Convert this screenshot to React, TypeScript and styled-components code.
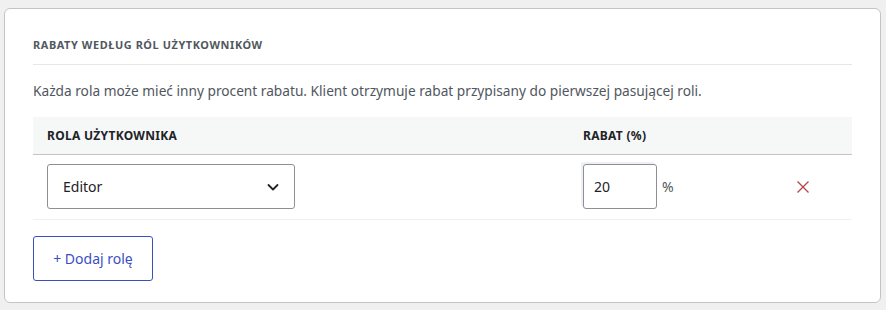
import React from "react";
import styled, { createGlobalStyle } from "styled-components";

const Global = createGlobalStyle`
  html, body { margin: 0; padding: 0; background: #f0f0f1; }
  body { padding: 8px 5px 0 4px; font-family: "Noto Sans", "Open Sans", sans-serif; color: #1d2327; }
  * { box-sizing: border-box; }
`;

const Card = styled.section`
  background: #fff;
  border: 1px solid #c3c4c7;
  border-radius: 6px;
  padding: 28px 28px 21px;
`;

const Title = styled.h2`
  margin: 0;
  padding-bottom: 12px;
  border-bottom: 1px solid #e6e7e8;
  font-size: 10.9px;
  line-height: 15px;
  font-weight: 700;
  letter-spacing: 0.6px;
  text-transform: uppercase;
  color: #50575e;
`;

const Desc = styled.p`
  margin: 16px 0 16px;
  font-size: 13.7px;
  line-height: 20px;
  color: #50575e;
`;

const Grid = styled.div`
  display: grid;
  grid-template-columns: 536px 185px 98px;
`;

const HeadCell = styled.div`
  background: #f6f7f7;
  border-bottom: 1px solid #c3c4c7;
  height: 38px;
  padding: 0 14px;
  display: flex;
  align-items: center;
  font-size: 12px;
  font-weight: 700;
  letter-spacing: 0.3px;
  text-transform: uppercase;
  color: #1d2327;
`;

const Cell = styled.div<{ $center?: boolean }>`
  border-bottom: 1px solid #f0f0f1;
  height: 65px;
  padding: 9px 14px 10px;
  display: flex;
  align-items: center;
  justify-content: ${(p) => (p.$center ? "center" : "flex-start")};
  gap: 5px;
`;

const Select = styled.div`
  width: 248px;
  height: 45px;
  border: 1px solid #8c8f94;
  border-radius: 3px;
  display: flex;
  align-items: center;
  justify-content: space-between;
  padding: 0 14px 0 15px;
  font-size: 14px;
  color: #1d2327;
`;

const NumInput = styled.div`
  width: 74px;
  height: 45px;
  border: 1px solid #8c8f94;
  border-radius: 3px;
  display: flex;
  align-items: center;
  padding: 0 10px;
  font-size: 14px;
  color: #1d2327;
  box-shadow: -2px -2px 0 0 #eef0f3;
`;

const Unit = styled.span`
  font-size: 14px;
  color: #50575e;
`;

const RemoveBtn = styled.button`
  border: 0;
  background: none;
  padding: 0;
  display: flex;
  color: #b84345;
  cursor: pointer;
`;

const AddBtn = styled.button`
  margin-top: 16px;
  width: 120px;
  height: 45px;
  border: 1px solid #3a4fc5;
  border-radius: 3px;
  background: #fff;
  color: #3a4fc5;
  font-family: inherit;
  font-size: 14px;
  cursor: pointer;
`;

export default function App() {
  return (
    <>
      <Global />
      <Card>
        <Title>Rabaty według ról użytkowników</Title>
        <Desc>
          Każda rola może mieć inny procent rabatu. Klient otrzymuje rabat przypisany do pierwszej pasującej roli.
        </Desc>
        <Grid>
          <HeadCell>Rola użytkownika</HeadCell>
          <HeadCell>Rabat (%)</HeadCell>
          <HeadCell />
          <Cell>
            <Select>
              <span>Editor</span>
              <svg width="14" height="14" viewBox="0 0 14 14" fill="none">
                <path d="M2.5 5l4.5 4.5L11.5 5" stroke="#1d2327" strokeWidth="1.8" strokeLinecap="round" strokeLinejoin="round" />
              </svg>
            </Select>
          </Cell>
          <Cell>
            <NumInput>20</NumInput>
            <Unit>%</Unit>
          </Cell>
          <Cell $center>
            <RemoveBtn aria-label="Usuń">
              <svg width="14" height="14" viewBox="0 0 14 14" fill="none">
                <path d="M1.5 1.5l11 11M12.5 1.5l-11 11" stroke="currentColor" strokeWidth="1.3" />
              </svg>
            </RemoveBtn>
          </Cell>
        </Grid>
        <AddBtn>+ Dodaj rolę</AddBtn>
      </Card>
    </>
  );
}
